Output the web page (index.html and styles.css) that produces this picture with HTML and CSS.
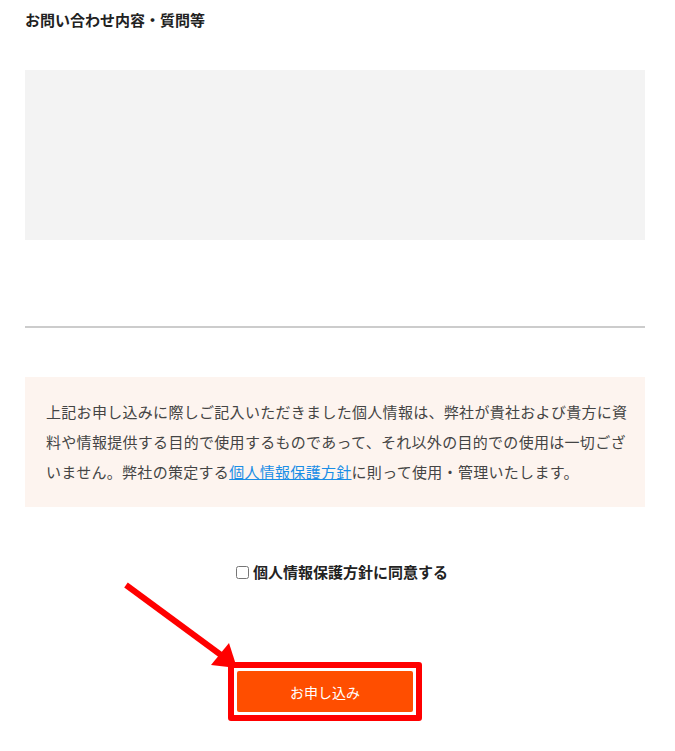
FILE: index.html
```html
<!DOCTYPE html>
<html lang="ja">
<head>
    <meta charset="UTF-8">
    <meta name="viewport" content="width=device-width, initial-scale=1.0">
    <title>お問い合わせ</title>
    <link rel="stylesheet" href="styles.css">
</head>
<body>
<div class="page">
    <form class="contact-form">
        <label class="field-title" for="message">お問い合わせ内容・質問等</label>
        <textarea id="message" class="message"></textarea>

        <hr class="divider">

        <!-- Privacy notice -->
        <div class="notice">
            <p>
                上記お申し込みに際しご記入いただきました個人情報は、弊社が貴社および貴方に資<br>料や情報提供する目的で使用するものであって、それ以外の目的での使用は一切ござ<br>いません。弊社の策定する<a href="#" class="notice-link">個人情報保護方針</a>に則って使用・管理いたします。
            </p>
        </div>

        <div class="agree-row">
            <label class="agree">
                <input type="checkbox" class="agree-check">
                個人情報保護方針に同意する
            </label>
        </div>

        <div class="submit-row">
            <div class="highlight">
                <button type="button" class="submit-button">お申し込み</button>
            </div>
        </div>
    </form>

    <!-- Annotation arrow -->
    <svg class="arrow" viewBox="0 0 675 751">
        <line x1="126" y1="585" x2="221" y2="655"></line>
        <polygon points="237,668 211,665 229,643"></polygon>
    </svg>
</div>
</body>
</html>
```

FILE: styles.css
```css
* {
    box-sizing: border-box;
    margin: 0;
    padding: 0;
}

body {
    background-color: #ffffff;
    font-family: "Noto Sans CJK JP", "Noto Sans", sans-serif;
    color: #333333;
}

.page {
    position: relative;
    width: 675px;
    min-height: 751px;
}

.contact-form {
    display: flex;
    flex-direction: column;
    width: 670px;
    padding: 12px 25px 0;
}

.field-title {
    font-size: 15px;
    line-height: 16px;
    font-weight: bold;
    color: #222222;
}

.message {
    display: block;
    width: 100%;
    height: 170px;
    margin-top: 42px;
    background-color: #f3f3f3;
    border: none;
    resize: none;
    outline: none;
}

.divider {
    margin-top: 86px;
    border: none;
    height: 2px;
    background-color: #cccccc;
}

.notice {
    margin-top: 49px;
    background-color: #fdf4ef;
    padding: 20px 20px 20px 21px;
    font-size: 15px;
    letter-spacing: 0.3px;
    line-height: 30px;
    color: #444444;
    white-space: nowrap;
}

.notice-link {
    color: #1a8ee6;
    text-decoration: underline;
}

.agree-row {
    display: flex;
    justify-content: center;
    margin-top: 57px;
    padding-left: 14px;
}

.agree {
    display: flex;
    align-items: center;
    gap: 4px;
    font-size: 15px;
    line-height: 16px;
    font-weight: bold;
    color: #222222;
}

.agree-check {
    width: 13px;
    height: 13px;
    margin: 0;
}

.submit-row {
    display: flex;
    justify-content: center;
    margin-top: 82px;
    padding-right: 20px;
}

.highlight {
    border: 6px solid #ff0000;
    border-radius: 3px;
    padding: 3px;
}

.submit-button {
    display: block;
    width: 176px;
    height: 41px;
    background-color: #ff4e00;
    border: none;
    border-radius: 2px;
    color: #ffffff;
    font-family: inherit;
    font-size: 14px;
    cursor: pointer;
}

/* Annotation overlay */
.arrow {
    position: absolute;
    left: 0;
    top: 0;
    width: 675px;
    height: 751px;
    pointer-events: none;
}

.arrow line {
    stroke: #ff0000;
    stroke-width: 6;
}

.arrow polygon {
    fill: #ff0000;
}
```
